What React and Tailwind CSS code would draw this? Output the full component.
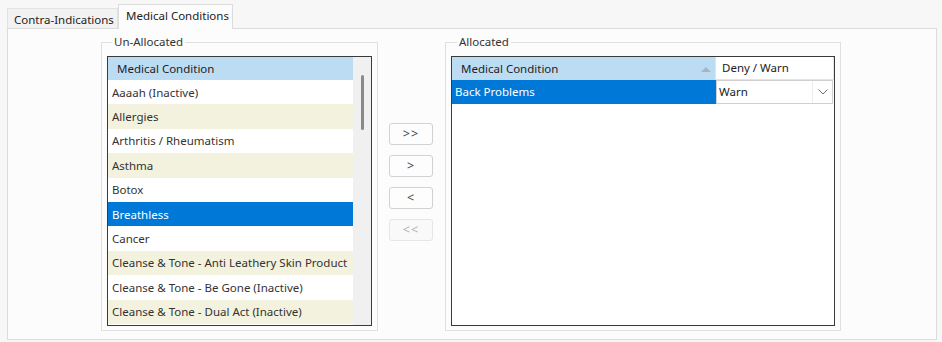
import React from "react";

const font = { fontFamily: '"Noto Sans", "Open Sans", sans-serif' };

const rows = [
  { t: "Aaaah (Inactive)", k: "w" },
  { t: "Allergies", k: "b" },
  { t: "Arthritis / Rheumatism", k: "w" },
  { t: "Asthma", k: "b" },
  { t: "Botox", k: "w" },
  { t: "Breathless", k: "s" },
  { t: "Cancer", k: "w" },
  { t: "Cleanse & Tone - Anti Leathery Skin Product", k: "b" },
  { t: "Cleanse & Tone - Be Gone (Inactive)", k: "w" },
  { t: "Cleanse & Tone - Dual Act (Inactive)", k: "b" },
];

function Row({ t, k }) {
  const cls =
    k === "s"
      ? "bg-[#0078d7] text-white"
      : k === "b"
      ? "bg-[#f2f2de] text-[#333]"
      : "bg-white text-[#333]";
  return (
    <div className={`h-[24.4px] flex items-center pl-[4px] whitespace-nowrap overflow-hidden ${cls}`}>
      {t}
    </div>
  );
}

function Btn({ children, disabled }) {
  return (
    <div
      className={`w-[44px] h-[22px] rounded-[3px] border flex items-center justify-center text-[12.5px] tracking-[1px] ${
        disabled
          ? "border-[#e6e6e6] bg-[#f9f9f9] text-[#b0b0b0]"
          : "border-[#d2d2d2] bg-[#fdfdfd] text-[#444]"
      }`}
    >
      {children}
    </div>
  );
}

export default function App() {
  return (
    <div
      className="w-[942px] h-[342px] bg-[#f7f7f7] overflow-hidden text-[11.5px] text-[#333]"
      style={font}
    >
      {/* tab strip */}
      <div className="h-[28px] pl-[7px] flex items-end">
        <div className="w-[111px] h-[20px] border border-b-0 border-[#e2e2e2] bg-[#f2f2f2] flex items-center pl-[6px] pt-[2px] text-[#222] whitespace-nowrap">
          Contra-Indications
        </div>
        <div className="relative z-10 mb-[-1px] w-[115px] h-[25px] border border-b-0 border-[#dcdcdc] bg-[#fcfcfc] flex items-center pl-[7px] pb-[2px] text-[#222] whitespace-nowrap">
          Medical Conditions
        </div>
      </div>
      {/* panel */}
      <div className="ml-[7px] w-[930px] h-[312px] border border-[#dcdcdc] bg-[#fcfcfc] pt-[5px] pl-[93px] flex items-start">
        {/* Un-Allocated */}
        <fieldset className="w-[277px] min-w-0 shrink-0 border border-[#e0e0e0] px-[5px] pt-[6px] pb-[4px]">
          <legend className="ml-[5px] px-[2px] leading-[16px] text-[#333]">Un-Allocated</legend>
          <div className="h-[270px] border border-[#3a3a3a] bg-white flex">
            <div className="flex-1 min-w-0 flex flex-col">
              <div className="h-[23px] bg-[#bcdcf4] flex items-center pl-[9px] text-[#222]">
                Medical Condition
              </div>
              {rows.map((r) => (
                <Row key={r.t} {...r} />
              ))}
            </div>
            <div className="w-[18px] shrink-0 bg-[#f0f0f0] flex justify-center pt-[18px]">
              <div className="w-[3px] h-[55px] rounded-full bg-[#8a8a8a]" />
            </div>
          </div>
        </fieldset>

        {/* buttons */}
        <div className="ml-[11px] mt-[89px] shrink-0 flex flex-col gap-[10px]">
          <Btn>&gt;&gt;</Btn>
          <Btn>&gt;</Btn>
          <Btn>&lt;</Btn>
          <Btn disabled>&lt;&lt;</Btn>
        </div>

        {/* Allocated */}
        <fieldset className="ml-[12px] w-[396px] min-w-0 shrink-0 border border-[#e0e0e0] px-[5px] pt-[6px] pb-[4px]">
          <legend className="ml-[6px] px-[2px] leading-[16px] text-[#333]">Allocated</legend>
          <div className="h-[270px] border border-[#3a3a3a] bg-white flex flex-col">
            <div className="h-[23px] flex">
              <div className="w-[264px] bg-[#bcdcf4] flex items-center pl-[9px] pr-[4px] border-r border-[#d6e6f2] text-[#222]">
                <span className="flex-1">Medical Condition</span>
                <svg width="10" height="6" viewBox="0 0 10 6">
                  <polygon points="0,6 5,1 10,6" fill="#a8b4be" />
                </svg>
              </div>
              <div className="flex-1 bg-white flex items-center pl-[6px] border-r border-b border-[#e4e4e4] text-[#222]">
                Deny / Warn
              </div>
            </div>
            <div className="h-[24px] flex">
              <div className="w-[264px] bg-[#0078d7] text-white flex items-center pl-[3px]">
                Back Problems
              </div>
              <div className="w-[117px] border border-[#d0d0d0] bg-white flex items-center">
                <span className="flex-1 pl-[2px] text-[#222]">Warn</span>
                <div className="w-[20px] h-full border-l border-[#ececec] flex items-center justify-center">
                  <svg width="10" height="6" viewBox="0 0 10 6">
                    <polyline points="0.5,0.5 5,5 9.5,0.5" fill="none" stroke="#707070" strokeWidth="1" />
                  </svg>
                </div>
              </div>
            </div>
          </div>
        </fieldset>
      </div>
    </div>
  );
}
